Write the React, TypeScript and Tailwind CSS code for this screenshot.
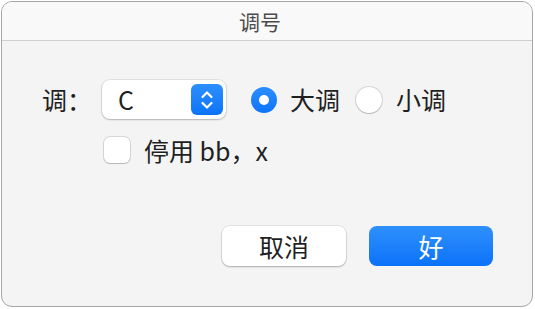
export default function App() {
  const font = { fontFamily: '"Noto Sans CJK SC", "Noto Sans", sans-serif' }
  return (
    <div className="w-[535px] h-[309px] bg-white pl-[1px] pt-[1px]" style={font}>
      <div className="w-[532px] h-[306px] border border-[#a6a6a6] rounded-[11px] overflow-hidden bg-[#f4f4f4] flex flex-col">
        {/* title bar */}
        <div className="h-[39px] shrink-0 bg-[#f9f9f9] border-b border-[#d0d0d0] flex items-center justify-center pr-[14px]">
          <span className="text-[21px] leading-none text-[#4b4b4b]">调号</span>
        </div>

        <div className="flex flex-col pl-[40px] pt-[39px]">
          {/* key row */}
          <div className="flex items-center h-[39px]">
            <span className="w-[60px] text-[25px] leading-none text-[#1f1f1f]">调：</span>
            <div className="w-[124px] h-[39px] bg-white rounded-[8px] shadow-[0_0_0_1px_rgba(0,0,0,0.08),0_1px_2px_rgba(0,0,0,0.2)] flex items-center justify-between pl-[16px] pr-[3px]">
              <span className="text-[25px] leading-none text-[#1f1f1f]">C</span>
              <div className="w-[32px] h-[31px] rounded-[6px] bg-gradient-to-b from-[#2d8ffc] to-[#0b73f9] flex items-center justify-center">
                <svg width="14" height="22" viewBox="0 0 14 22" fill="none" stroke="white" strokeWidth="2.2" strokeLinecap="round" strokeLinejoin="round">
                  <path d="M2.5 8 7 3.5 11.5 8" />
                  <path d="M2.5 14 7 18.5 11.5 14" />
                </svg>
              </div>
            </div>
            <div className="ml-[25px] w-[26px] h-[26px] rounded-full bg-gradient-to-b from-[#2b8dfc] to-[#0c74f9] flex items-center justify-center">
              <div className="w-[10px] h-[10px] rounded-full bg-white" />
            </div>
            <span className="ml-[13px] text-[25px] leading-none text-[#1f1f1f]">大调</span>
            <div className="ml-[16px] w-[26px] h-[26px] rounded-full bg-white shadow-[0_0_0_1px_rgba(0,0,0,0.12),0_1px_1px_rgba(0,0,0,0.15)]" />
            <span className="ml-[14px] text-[25px] leading-none text-[#1f1f1f]">小调</span>
          </div>

          {/* checkbox row */}
          <div className="flex items-center h-[26px] mt-[18px] pl-[62px]">
            <div className="w-[26px] h-[26px] rounded-[6px] bg-white shadow-[0_0_0_1px_rgba(0,0,0,0.12),0_1px_1px_rgba(0,0,0,0.15)]" />
            <span className="ml-[14px] text-[25px] leading-none text-[#1f1f1f]">停用 bb，x</span>
          </div>

          {/* buttons */}
          <div className="flex justify-end gap-[23px] pr-[39px] mt-[63px]">
            <button className="w-[124px] h-[40px] rounded-[8px] bg-white shadow-[0_0_0_1px_rgba(0,0,0,0.06),0_1px_2px_rgba(0,0,0,0.25)] text-[25px] leading-none text-[#1f1f1f]">
              取消
            </button>
            <button className="w-[124px] h-[40px] rounded-[8px] bg-gradient-to-b from-[#2e90fc] to-[#0a72f9] text-[25px] leading-none text-white">
              好
            </button>
          </div>
        </div>
      </div>
    </div>
  )
}
